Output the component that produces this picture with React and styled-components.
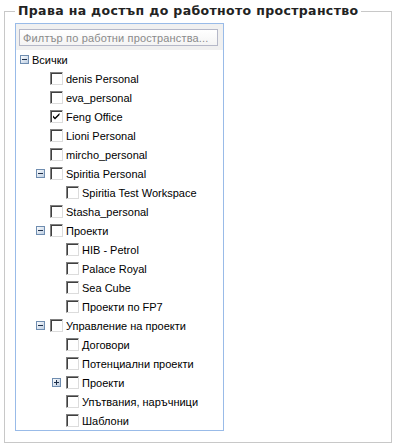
import React from "react";
import styled, { createGlobalStyle } from "styled-components";

const GlobalStyle = createGlobalStyle`
  html, body {
    margin: 0;
    padding: 0;
    background: #ffffff;
  }
  body {
    width: 396px;
    height: 448px;
    overflow: hidden;
  }
`;

const Fieldset = styled.fieldset`
  box-sizing: border-box;
  width: 388px;
  margin: 0 0 0 4px;
  padding: 0 10px 11px 10px;
  border: 1px solid #c8c8c8;
  min-width: 0;
`;

const Legend = styled.legend`
  padding: 0 3px;
  font-family: "DejaVu Sans", Verdana, sans-serif;
  font-weight: bold;
  font-size: 12.5px;
  letter-spacing: 0.35px;
  line-height: 22px;
  color: #222;
`;

const Panel = styled.div`
  margin-top: 1px;
  width: 209px;
  box-sizing: border-box;
  border: 1px solid #99bbe8;
  background: #fff;
`;

const PanelHeader = styled.div`
  background: #f0f0f0;
  padding: 5px 4px 4px 3px;
`;

const FilterInput = styled.input`
  display: block;
  box-sizing: border-box;
  width: 199px;
  height: 17px;
  margin: 0;
  padding: 0 3px;
  border: 1px solid #b5b8c8;
  background: linear-gradient(#ffffff, #f4f4f4);
  font-family: "Liberation Sans", Arial, sans-serif;
  font-size: 11px;
  letter-spacing: 0.15px;
  color: #000;
  outline: none;
  &::placeholder {
    color: #8a8a8a;
  }
`;

const TreeBody = styled.ul`
  list-style: none;
  margin: 0;
  padding: 0;
`;

const Row = styled.li`
  display: flex;
  align-items: center;
  height: 19px;
  padding-left: ${(p) => p.$level * 16}px;
  font-family: "Liberation Sans", Arial, sans-serif;
  font-size: 11px;
  color: #000;
  white-space: nowrap;
`;

const Elbow = styled.span`
  display: flex;
  align-items: center;
  justify-content: center;
  width: 16px;
  height: 19px;
  flex: none;
`;

const Checkbox = styled.span`
  position: relative;
  box-sizing: border-box;
  flex: none;
  width: 13px;
  height: 13px;
  margin-left: 2px;
  border: 1px solid;
  border-color: #808080 #dcdcdc #dcdcdc #808080;
  box-shadow: inset 1px 1px 0 #404040;
  background: #fff;
`;

const Label = styled.span`
  margin-left: ${(p) => (p.$noCheck ? 0 : 3)}px;
`;

const ToggleIcon = ({ open }) => (
  <svg width="9" height="9" viewBox="0 0 9 9">
    <defs>
      <linearGradient id="tg" x1="0" y1="0" x2="1" y2="1">
        <stop offset="0" stopColor="#ffffff" />
        <stop offset="1" stopColor="#b9cbe0" />
      </linearGradient>
    </defs>
    <rect x="0.5" y="0.5" width="8" height="8" fill="url(#tg)" stroke="#6f8db0" />
    <rect x="2" y="4" width="5" height="1" fill="#1d2f4a" />
    {!open && <rect x="4" y="2" width="1" height="5" fill="#1d2f4a" />}
  </svg>
);

const Check = () => (
  <svg
    width="9"
    height="9"
    viewBox="0 0 9 9"
    style={{ position: "absolute", left: 1, top: 1 }}
  >
    <path d="M1 3.5 L3 5.5 L7.5 1 L7.5 3 L3 7.5 L1 5.5 Z" fill="#000" />
  </svg>
);

const tree = {
  name: "Всички",
  root: true,
  children: [
    { name: "denis Personal" },
    { name: "eva_personal" },
    { name: "Feng Office", checked: true },
    { name: "Lioni Personal" },
    { name: "mircho_personal" },
    {
      name: "Spiritia Personal",
      children: [{ name: "Spiritia Test Workspace" }],
    },
    { name: "Stasha_personal" },
    {
      name: "Проекти",
      children: [
        { name: "HIB - Petrol" },
        { name: "Palace Royal" },
        { name: "Sea Cube" },
        { name: "Проекти по FP7" },
      ],
    },
    {
      name: "Управление на проекти",
      children: [
        { name: "Договори" },
        { name: "Потенциални проекти" },
        { name: "Проекти", collapsed: true },
        { name: "Упътвания, наръчници" },
        { name: "Шаблони" },
      ],
    },
  ],
};

const renderNode = (node, level, out) => {
  const hasToggle = node.children || node.collapsed;
  out.push(
    <Row key={out.length} $level={level}>
      <Elbow>{hasToggle && <ToggleIcon open={!node.collapsed} />}</Elbow>
      {!node.root && <Checkbox>{node.checked && <Check />}</Checkbox>}
      <Label $noCheck={node.root}>{node.name}</Label>
    </Row>
  );
  if (node.children && !node.collapsed) {
    node.children.forEach((c) => renderNode(c, level + 1, out));
  }
  return out;
};

export default function App() {
  const rows = renderNode(tree, 0, []);
  return (
    <>
      <GlobalStyle />
      <Fieldset>
        <Legend>Права на достъп до работното пространство</Legend>
        <Panel>
          <PanelHeader>
            <FilterInput placeholder="Филтър по работни пространства..." />
          </PanelHeader>
          <TreeBody>{rows}</TreeBody>
        </Panel>
      </Fieldset>
    </>
  );
}
